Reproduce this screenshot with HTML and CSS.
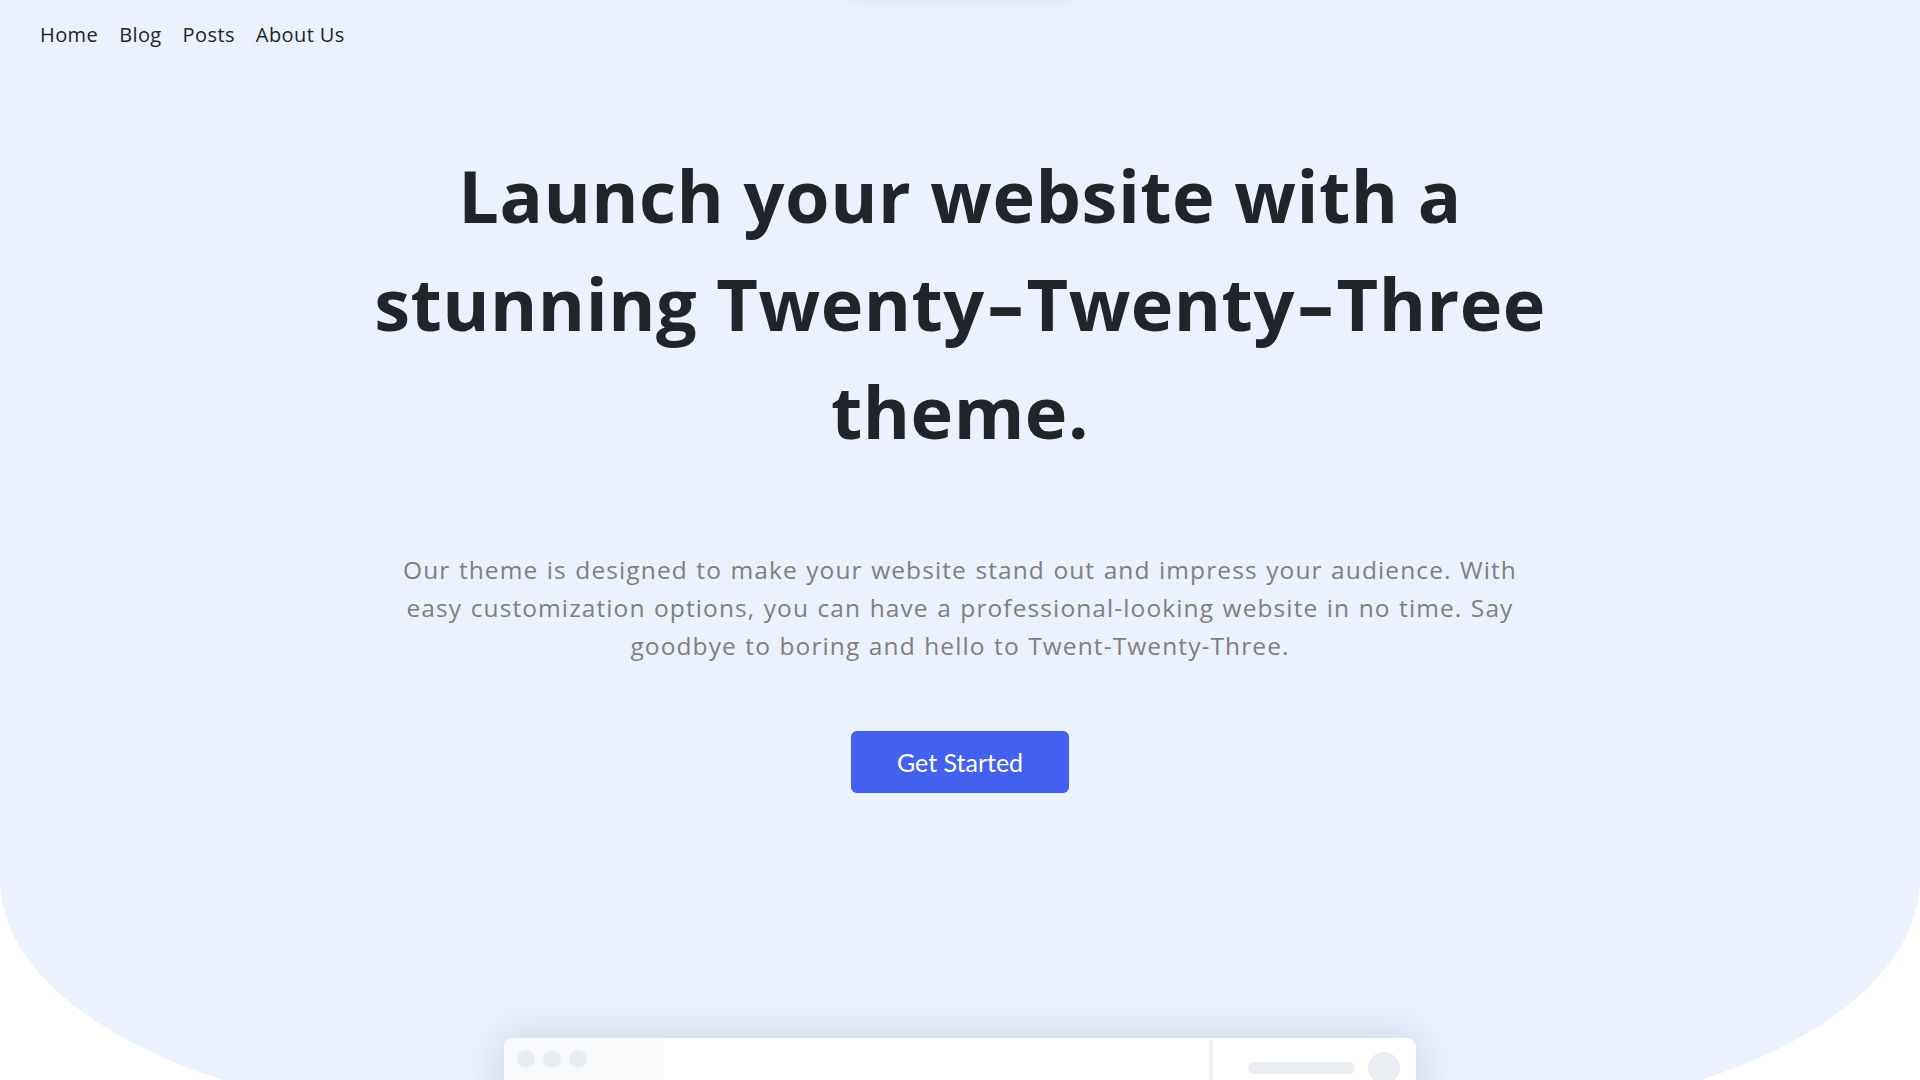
FILE: index.html
```html
<!DOCTYPE html>
<html lang="en">
<head>
<meta charset="utf-8">
<title>Twenty-Twenty-Three</title>
<link rel="stylesheet" href="styles.css">
</head>
<body>
<div class="top-shadow"></div>
<section class="hero">
  <nav class="nav">
    <a href="#">Home</a>
    <a href="#">Blog</a>
    <a href="#">Posts</a>
    <a href="#">About Us</a>
  </nav>
  <div class="hero-content">
    <h1 class="title">Launch your website with a<br>stunning Twenty<span class="dash">-</span>Twenty<span class="dash">-</span>Three<br>theme.</h1>
    <p class="lead">Our theme is designed to make your website stand out and impress your audience. With<br>easy customization options, you can have a professional-looking website in no time. Say<br>goodbye to boring and hello to Twent-Twenty-Three.</p>
    <a class="btn" href="#">Get Started</a>
  </div>
  <div class="mockup">
    <div class="mock-side">
      <span class="dot"></span><span class="dot"></span><span class="dot"></span>
    </div>
    <div class="mock-main"></div>
    <div class="mock-divider"></div>
    <div class="mock-right">
      <span class="search"></span>
      <span class="avatar"></span>
    </div>
  </div>
</section>
</body>
</html>
```
FILE: styles.css
```css
html, body {
  margin: 0;
  padding: 0;
}
body {
  background: #ffffff;
  font-family: "Open Sans", "Noto Sans", sans-serif;
  overflow: hidden;
  height: 1080px;
}
.top-shadow {
  position: absolute;
  left: 852px;
  top: -60px;
  width: 220px;
  height: 58px;
  background: #ebf1fd;
  border-radius: 8px;
  box-shadow: 0 0 14px rgba(60, 70, 110, 0.12);
  z-index: 2;
}
.hero {
  background: #ebf1fd;
  height: 1120px;
  border-radius: 0 0 490px 500px / 0 0 240px 240px;
  display: flex;
  flex-direction: column;
  align-items: center;
}
.nav {
  align-self: stretch;
  display: flex;
  gap: 21px;
  padding: 20px 40px 0;
}
.nav a {
  color: #212529;
  text-decoration: none;
  font-size: 20px;
  line-height: 30px;
  letter-spacing: 0.4px;
}
.hero-content {
  display: flex;
  flex-direction: column;
  align-items: center;
  text-align: center;
}
.title {
  margin: 91px 0 0;
  font-size: 72px;
  line-height: 108px;
  font-weight: 700;
  color: #212529;
  letter-spacing: 0.5px;
}
.dash {
  display: inline-block;
  margin: 0 9px;
  transform: scaleX(1.6);
}
.lead {
  margin: 86px 0 0;
  width: 1160px;
  font-size: 24.5px;
  line-height: 38px;
  letter-spacing: 1.1px;
  word-spacing: 1px;
  color: #7f7f7f;
}
.btn {
  margin-top: 66px;
  width: 218px;
  height: 62px;
  display: flex;
  align-items: center;
  justify-content: center;
  background: #4361ee;
  border-radius: 6px;
  color: #ffffff;
  text-decoration: none;
  font-family: "Lato", sans-serif;
  font-size: 25px;
}
.mockup {
  margin-top: 245px;
  width: 912px;
  height: 420px;
  flex: none;
  background: #ffffff;
  border-radius: 9px;
  box-shadow: 0 0 40px rgba(40, 50, 100, 0.16);
  display: flex;
  overflow: hidden;
}
.mock-side {
  width: 160px;
  background: #f7f9fb;
  display: flex;
  gap: 8px;
  padding: 12px 0 0 13px;
  box-sizing: border-box;
  align-items: flex-start;
}
.dot {
  width: 18px;
  height: 18px;
  border-radius: 50%;
  background: #e9edf3;
}
.mock-main {
  flex: 1;
}
.mock-divider {
  width: 4px;
  margin-top: 2px;
  background: #eef1f5;
}
.mock-right {
  width: 203px;
  display: flex;
  align-items: flex-start;
  padding: 14px 0 0 35px;
  box-sizing: border-box;
  gap: 13px;
}
.search {
  margin-top: 10px;
  width: 107px;
  height: 12px;
  border-radius: 6px;
  background: #ebeff4;
}
.avatar {
  width: 32px;
  height: 32px;
  border-radius: 50%;
  background: #ebeff4;
}
```
